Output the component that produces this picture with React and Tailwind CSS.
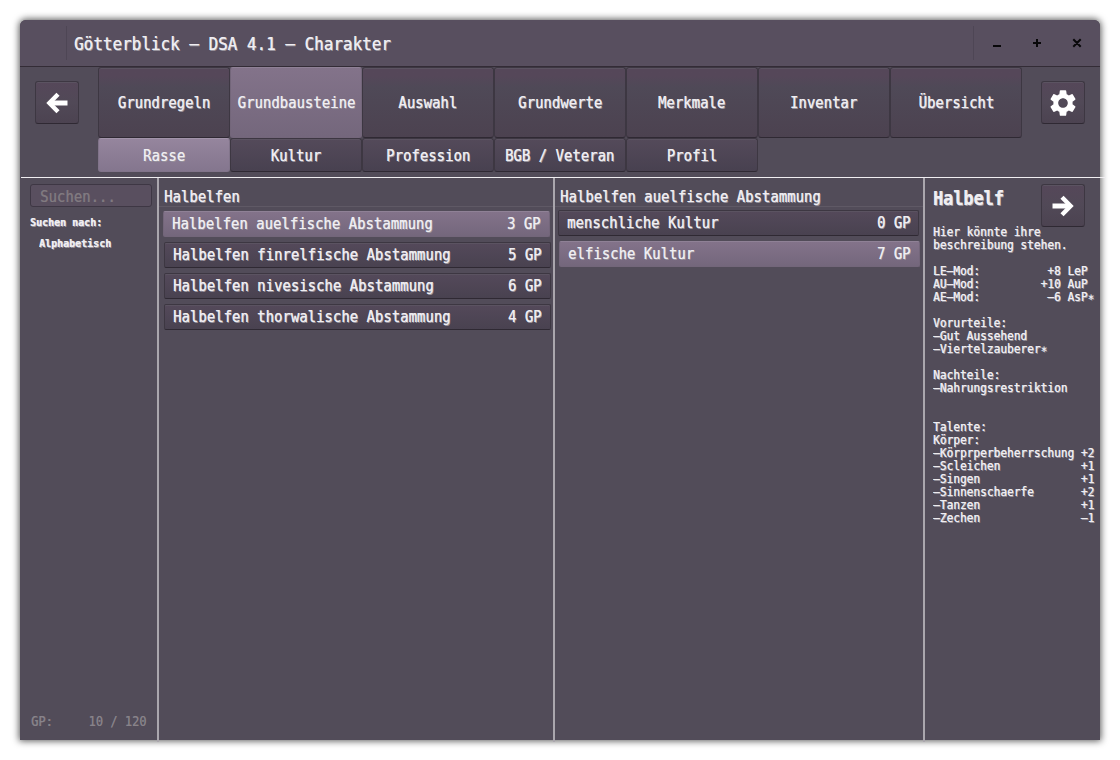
import React from "react";

const SIZES = {
  title: "text-[18px] leading-[20px] scale-x-[0.886]",
  base: "text-[16px] leading-[20px] scale-x-[0.873]",
  gp: "text-[14px] leading-[18px] scale-x-[0.86]",
  small: "text-[11px] leading-[13px] scale-x-[0.908] font-bold",
  detail: "text-[12px] leading-[13px] scale-x-[0.93]",
  head: "text-[19px] leading-[22px] scale-x-[0.885] font-bold",
};

function T({ size = "base", origin = "origin-left", tone = "text-[#f0eef2] [text-shadow:0.5px_0_0_#d0cdd4,1px_1px_0_#98939d]", className = "", children }) {
  return (
    <span className={`inline-block whitespace-pre ${SIZES[size]} ${origin} ${tone} ${className}`}>{children}</span>
  );
}

const DARK = "border border-[#3d3742] border-b-[#2f2933] bg-linear-to-b shadow-[inset_0_1px_0_#5b5361]";
const TALL = "from-[#554759] via-[#514957] to-[#4c4351]";
const LIGHT = "border border-[#73667a] border-t-[#8f8196] bg-linear-to-b from-[#83738a] to-[#74677c]";

function Tab({ label, active, tall }) {
  const look = active
    ? tall
      ? LIGHT
      : "border border-[#81748a] border-t-[#a294aa] bg-linear-to-b from-[#95859d] to-[#84768e]"
    : tall
      ? `${DARK} from-[#554759] from-12% via-[#4f4957] via-28% to-[#4c4250]`
      : `${DARK} from-[#544a5a] to-[#484150]`;
  return (
    <div className={`flex w-[132px] shrink-0 items-center justify-center rounded-[3px] ${tall ? "h-[71px]" : "h-[34px]"} ${look}`}>
      <T origin="origin-center" className={tall ? "" : "mt-px"}>{label}</T>
    </div>
  );
}

function IconButton({ children }) {
  return (
    <div className={`flex h-[43px] w-[44px] shrink-0 items-center justify-center rounded-[3px] ${DARK} ${TALL}`}>{children}</div>
  );
}

function Arrow({ flip }) {
  return (
    <svg width="22" height="22" viewBox="0 0 22 22" className={flip ? "-scale-x-100" : ""} fill="none" stroke="#fff">
      <path d="M21.5 11H4" strokeWidth="5" />
      <path d="M12 2.3L3.4 11L12 19.7" strokeWidth="4.4" />
    </svg>
  );
}

function Gear() {
  return (
    <svg width="32" height="32" viewBox="0 0 24 24" fill="#fff">
      <path d="M19.14 12.94c.04-.3.06-.61.06-.94 0-.32-.02-.64-.07-.94l2.03-1.58a.49.49 0 0 0 .12-.61l-1.92-3.32a.488.488 0 0 0-.59-.22l-2.39.96c-.5-.38-1.03-.7-1.62-.94l-.36-2.54a.484.484 0 0 0-.48-.41h-3.84c-.24 0-.43.17-.47.41l-.36 2.54c-.59.24-1.13.57-1.62.94l-2.39-.96c-.22-.08-.47 0-.59.22L2.74 8.87c-.12.21-.08.47.12.61l2.03 1.58c-.05.3-.09.63-.09.94s.02.64.07.94l-2.03 1.58a.49.49 0 0 0-.12.61l1.92 3.32c.12.22.37.29.59.22l2.39-.96c.5.38 1.03.7 1.62.94l.36 2.54c.05.24.24.41.48.41h3.84c.24 0 .44-.17.47-.41l.36-2.54c.59-.24 1.13-.56 1.62-.94l2.39.96c.22.08.47 0 .59-.22l1.92-3.32c.12-.22.07-.47-.12-.61l-2.01-1.58zM12 15.6c-1.98 0-3.6-1.62-3.6-3.6s1.62-3.6 3.6-3.6 3.6 1.62 3.6 3.6-1.62 3.6-3.6 3.6z" />
    </svg>
  );
}

function Row({ label, gp, active, pad = "pr-[8.5px]", className = "" }) {
  return (
    <div className={`flex h-[26px] items-center justify-between rounded-[2px] pl-[8px] ${pad} ${active ? LIGHT : `${DARK} from-[#54495a] to-[#494250]`} ${className}`}>
      <T>{label}</T>
      <T origin="origin-right">{gp}</T>
    </div>
  );
}

const DETAILS = [
  "Hier könnte ihre",
  "beschreibung stehen.",
  "",
  "LE–Mod:          +8 LeP",
  "AU–Mod:         +10 AuP",
  "AE–Mod:          –6 AsP∗",
  "",
  "Vorurteile:",
  "–Gut Aussehend",
  "–Viertelzauberer∗",
  "",
  "Nachteile:",
  "–Nahrungsrestriktion",
  "",
  "",
  "Talente:",
  "Körper:",
  "–Körprperbeherrschung +2",
  "–Scleichen            +1",
  "–Singen               +1",
  "–Sinnenschaerfe       +2",
  "–Tanzen               +1",
  "–Zechen               –1",
];

const MAIN = ["Grundregeln", "Grundbausteine", "Auswahl", "Grundwerte", "Merkmale", "Inventar", "Übersicht"];
const SUB = ["Rasse", "Kultur", "Profession", "BGB / Veteran", "Profil"];
const COLUMN = "h-[564px] shrink-0 border-r-2 border-[#aaa6ad]";
const FAINT = "text-[#88838a] [text-shadow:0.5px_0_0_#7a757d]";

export default function App() {
  return (
    <div className="h-[760px] w-[1120px] overflow-hidden bg-white p-[20px] font-['DejaVu_Sans_Mono',monospace]">
      <div className="flex h-[720px] w-[1080px] flex-col rounded-t-[6px] bg-[#524c59] shadow-[0_0_7px_1px_rgba(0,0,0,0.65)]">
        <header className="flex h-[47px] shrink-0 items-center rounded-t-[6px] border-b border-[#332c36] bg-[#584f5f]">
          <div className="h-[34px] w-[47px] border-r border-[#4e4655]" />
          <T size="title" className="ml-[7px] mt-[2px]">Götterblick – DSA 4.1 – Charakter</T>
          <div className="ml-auto flex h-[34px] w-[127px] items-center border-l border-[#4e4655] pl-[18px]">
            <svg width="90" height="10" viewBox="0 0 90 10" stroke="#09080a" strokeWidth="2" fill="none">
              <path d="M1 8H9M41 5H49M45 1V9M81.3 1.3L88.7 8.7M88.7 1.3L81.3 8.7" />
            </svg>
          </div>
        </header>
        <nav className="flex h-[110px] shrink-0 items-start pl-[15px]">
          <div className="mt-[14px]"><IconButton><Arrow /></IconButton></div>
          <div className="ml-[19px] w-[924px]">
            <div className="flex">
              {MAIN.map((m) => <Tab key={m} label={m} tall active={m === "Grundbausteine"} />)}
            </div>
            <div className="flex">
              {SUB.map((s) => <Tab key={s} label={s} active={s === "Rasse"} />)}
            </div>
          </div>
          <div className="ml-[19px] mt-[14px]"><IconButton><Gear /></IconButton></div>
        </nav>
        <div className="ml-px h-px w-[1084px] shrink-0 bg-[#f0eef1]" />
        <main className="flex h-[562px] shrink-0">
          <aside className={`${COLUMN} flex w-[139px] flex-col pl-[10px] pt-[6px]`}>
            <div className="flex h-[23px] w-[122px] items-center rounded-[3px] border border-[#3e3744] bg-[#594f5f] pl-[9px]">
              <T tone="text-[#817a80] [text-shadow:0.5px_0_0_#766e78]" className="mt-[2px]">Suchen...</T>
            </div>
            <div className="mt-[9px] flex h-[13px]"><T size="small">Suchen nach:</T></div>
            <div className="mt-[8px] flex h-[13px] pl-[9px]"><T size="small">Alphabetisch</T></div>
            <div className="mb-[12px] mt-auto flex justify-between pl-px pr-[11px]">
              <T size="gp" tone={FAINT}>GP:</T>
              <T size="gp" tone={FAINT} origin="origin-right">10 / 120</T>
            </div>
          </aside>
          <section className={`${COLUMN} w-[396px]`}>
            <div className="flex h-[29px] items-start border-b border-[#5f5965] pl-[5px] pt-[9px]"><T>Halbelfen</T></div>
            <div className="flex flex-col gap-[5px] pl-[5px] pr-[2px] pt-[4px]">
              <Row label="Halbelfen auelfische Abstammung" gp="3 GP" active pad="pr-[8px]" className="-ml-px mr-px" />
              <Row label="Halbelfen finrelfische Abstammung" gp="5 GP" />
              <Row label="Halbelfen nivesische Abstammung" gp="6 GP" />
              <Row label="Halbelfen thorwalische Abstammung" gp="4 GP" />
            </div>
          </section>
          <section className={`${COLUMN} w-[370px]`}>
            <div className="flex h-[29px] items-start border-b border-[#5f5965] pl-[5px] pt-[9px]"><T>Halbelfen auelfische Abstammung</T></div>
            <div className="flex flex-col gap-[5px] pl-[3px] pr-[4px] pt-[3px]">
              <Row label="menschliche Kultur" gp="0 GP" pad="pr-[7px]" />
              <Row label="elfische Kultur" gp="7 GP" active pad="pr-[8px]" className="-mr-px ml-px" />
            </div>
          </section>
          <section className="min-w-0 flex-1 pl-[8px]">
            <div className="flex h-[48px] items-start justify-between pr-[15px] pt-[6px]">
              <div className="flex w-[80px] pt-[3px]"><T size="head">Halbelf</T></div>
              <IconButton><Arrow flip /></IconButton>
            </div>
            <div className="flex flex-col items-start">
              {DETAILS.map((line, i) => (
                <div key={i} className="flex h-[13px]"><T size="detail">{line}</T></div>
              ))}
            </div>
          </section>
        </main>
      </div>
    </div>
  );
}
